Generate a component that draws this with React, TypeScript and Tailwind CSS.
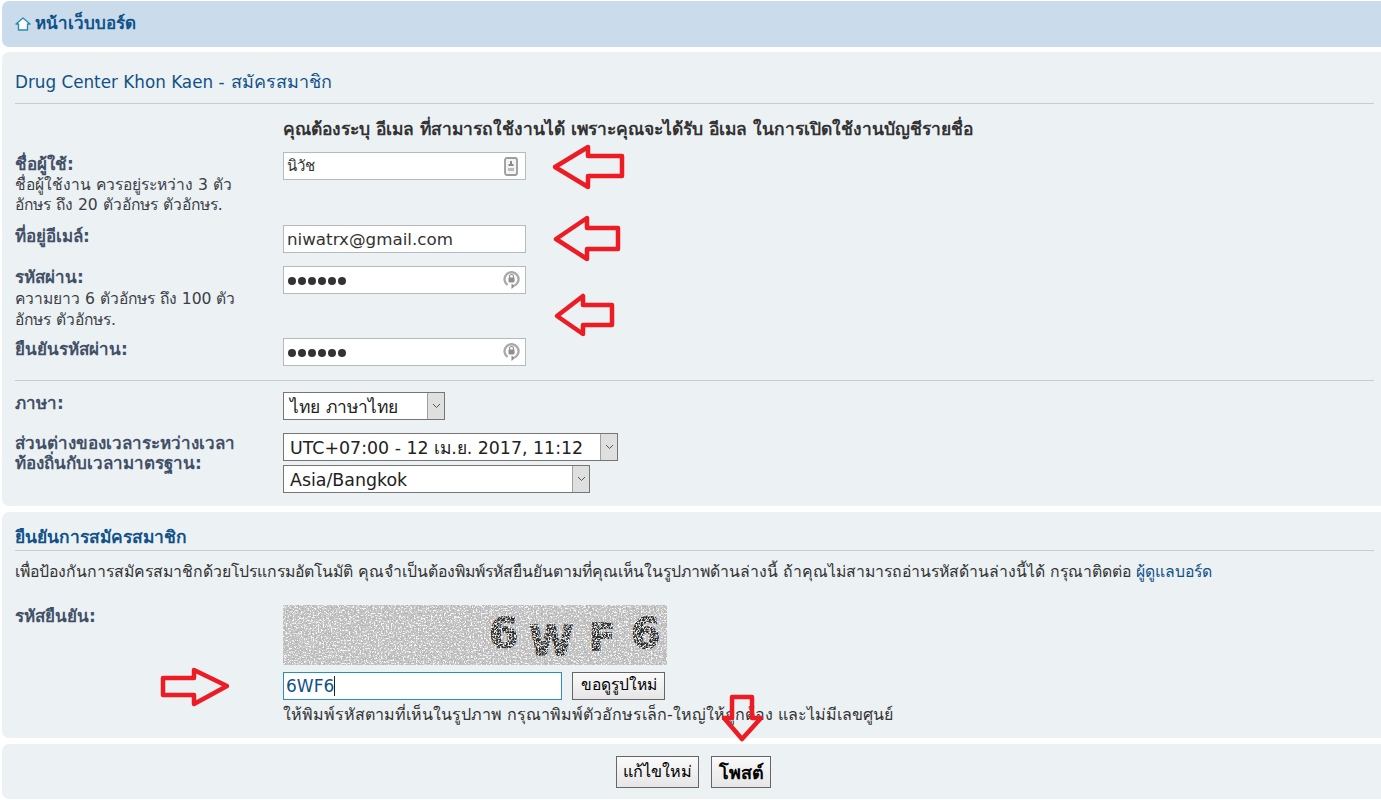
const inputCls =
  "flex items-center h-[28px] border border-[#b4bac0] bg-white px-[3px] text-[#333333]";
const labelCls = "text-[17px] font-bold text-[#425067] leading-[20px]";
const hintCls = "text-[15.6px] text-[#3a3f47] leading-[20px]";

function ContactIcon() {
  return (
    <svg width="14" height="19" viewBox="0 0 14 19" className="ml-auto mr-[4px]">
      <rect x="1" y="1" width="12" height="17" rx="2" fill="#f4f4f4" stroke="#9c9c9c" strokeWidth="1.8" />
      <rect x="6" y="4" width="2" height="3" fill="#8a8a8a" />
      <rect x="4.5" y="7" width="5" height="2" fill="#8a8a8a" />
      <rect x="4" y="11" width="6" height="3" fill="#bbbbbb" />
    </svg>
  );
}

function LockIcon() {
  return (
    <svg width="17" height="18" viewBox="0 0 17 18" className="ml-auto mr-[2px]">
      <path d="M4.5 14 A7 7 0 1 1 11.5 14.6" fill="none" stroke="#ababab" strokeWidth="2.4" />
      <path d="M8.5 18 L8.5 12.5 L12 15 Z" fill="#8f8f8f" />
      <rect x="5.5" y="6.5" width="6" height="5" rx="1" fill="#8f8f8f" />
      <path d="M6.5 7 V5.5 A2 2 0 0 1 10.5 5.5 V7" fill="none" stroke="#8f8f8f" strokeWidth="1.2" />
    </svg>
  );
}

function Dots() {
  return (
    <span className="flex gap-[2px] mt-[2px] ml-[1px]">
      {[0, 1, 2, 3, 4, 5].map((i) => (
        <span key={i} className="w-[8px] h-[8px] rounded-full bg-[#333333]" />
      ))}
    </span>
  );
}

function SelectBox({ width, text }: { width: string; text: string }) {
  return (
    <div className={`flex items-center justify-between h-[28px] border border-[#767676] bg-white pl-[6px] pr-0 text-[17.4px] text-[#222222] ${width}`}>
      <span className="pt-[2px]">{text}</span>
      <span className="flex items-center justify-center w-[17px] h-full bg-[#dfdfdf] border-l border-[#a0a0a0]">
        <svg width="9" height="6" viewBox="0 0 9 6">
          <path d="M1 1 L4.5 4.5 L8 1" fill="none" stroke="#555555" strokeWidth="1" />
        </svg>
      </span>
    </div>
  );
}

function Button({ children, bold }: { children: string; bold?: boolean }) {
  return (
    <button
      className={`h-[32px] border border-[#666666] bg-gradient-to-b from-[#fafafa] to-[#e6e6e6] text-black ${
        bold ? "font-bold text-[18px] w-[60px]" : "text-[16.2px] w-[83px]"
      }`}
    >
      {children}
    </button>
  );
}

function Captcha() {
  return (
    <svg width="384" height="60" className="block">
      <filter id="darkNoise">
        <feTurbulence type="fractalNoise" baseFrequency="0.6" numOctaves="2" seed="4" />
        <feColorMatrix values="0 0 0 0 0.45  0 0 0 0 0.45  0 0 0 0 0.45  6 0 0 0 -2.9" />
      </filter>
      <filter id="lightNoise">
        <feTurbulence type="fractalNoise" baseFrequency="0.6" numOctaves="2" seed="11" />
        <feColorMatrix values="0 0 0 0 0.93  0 0 0 0 0.93  0 0 0 0 0.93  6 0 0 0 -3.1" />
      </filter>
      <rect width="384" height="60" fill="#c4c4c4" />
      <g fontFamily="'DejaVu Sans', sans-serif" fontWeight="bold" fill="#2c2c2c" stroke="#2c2c2c" strokeWidth="1.5">
        <text x="206" y="43" fontSize="42">6</text>
        <text x="246" y="50" fontSize="40">W</text>
        <text x="306" y="45" fontSize="38">F</text>
        <text x="348" y="43" fontSize="42">6</text>
      </g>
      <rect width="384" height="60" filter="url(#darkNoise)" />
      <rect width="384" height="60" filter="url(#lightNoise)" />
    </svg>
  );
}

function Arrows() {
  const arrows = [
    "555,167 588,147 588,156 622,156 622,176 588,176 588,187",
    "556,239 587,218 587,228 618,228 618,249 587,249 587,259",
    "557,316 583,296 583,305 612,305 612,325 583,325 583,334",
    "227,686 194,670 194,678 163,678 163,695 194,695 194,704",
    "742,739 724,718 732,718 732,697 752,697 752,718 761,718",
  ];
  return (
    <svg width="1381" height="800" className="absolute top-0 left-0 pointer-events-none">
      {arrows.map((points) => (
        <polygon key={points} points={points} fill="none" stroke="#ed1c24" strokeWidth="4.5" strokeLinejoin="round" />
      ))}
    </svg>
  );
}

export default function App() {
  return (
    <div
      className="relative w-[1381px] h-[800px] overflow-hidden bg-white pl-[2px] pt-[1px] text-[14px] text-[#536482]"
      style={{ fontFamily: "Verdana, 'DejaVu Sans', 'Noto Sans', sans-serif" }}
    >
      {/* หน้าเว็บบอร์ด */}
      <div className="flex items-center h-[46px] rounded-l-[7px] bg-[#cadceb] pl-[13px] gap-[4px]">
        <svg width="16" height="14" viewBox="0 0 16 14">
          <path d="M1 7 L8 1 L15 7 H12.5 V13 H3.5 V7 Z" fill="#ffffff" stroke="#2a8bb0" strokeWidth="1.4" strokeLinejoin="round" />
        </svg>
        <span className="text-[17px] font-bold text-[#105289]">หน้าเว็บบอร์ด</span>
      </div>

      {/* สมัครสมาชิก */}
      <div className="mt-[5px] h-[454px] rounded-l-[7px] bg-[#ecf1f3] pl-[13px] pr-[7px] pt-[18px]">
        <h2 className="text-[16.8px] leading-[24px] text-[#105289] border-b border-[#cccccc] pb-[9px]">
          Drug Center Khon Kaen - <span className="ml-[1px] text-[18px]">สมัครสมาชิก</span>
        </h2>
        <p className="mt-[15px] ml-[268px] text-[17.45px] leading-[20px] font-bold text-[#333333]">
          คุณต้องระบุ อีเมล ที่สามารถใช้งานได้ เพราะคุณจะได้รับ อีเมล ในการเปิดใช้งานบัญชีรายชื่อ
        </p>

        <div className="mt-[13px] flex h-[73px]">
          <div className="w-[268px] pt-[2px]">
            <div className={labelCls}>ชื่อผู้ใช้:</div>
            <div className={`mt-[1px] ${hintCls}`}>ชื่อผู้ใช้งาน ควรอยู่ระหว่าง 3 ตัว</div>
            <div className={hintCls}>อักษร ถึง 20 ตัวอักษร ตัวอักษร.</div>
          </div>
          <div className={`${inputCls} w-[243px] text-[15px]`}>
            นิวัช
            <ContactIcon />
          </div>
        </div>

        <div className="flex h-[41px]">
          <div className={`w-[268px] pt-[1px] ${labelCls}`}>ที่อยู่อีเมล์:</div>
          <div className={`${inputCls} w-[243px] text-[16.7px]`}>
            <span className="pt-[2px]">niwatrx@gmail.com</span>
          </div>
        </div>

        <div className="flex h-[72px]">
          <div className="w-[268px] pt-[1px]">
            <div className={labelCls}>รหัสผ่าน:</div>
            <div className={`mt-[2px] ${hintCls}`}>ความยาว 6 ตัวอักษร ถึง 100 ตัว</div>
            <div className={`mt-[1px] ${hintCls}`}>อักษร ตัวอักษร.</div>
          </div>
          <div className={`${inputCls} w-[243px]`}>
            <Dots />
            <LockIcon />
          </div>
        </div>

        <div className="flex h-[43px] border-b border-[#cccccc]">
          <div className={`w-[268px] pt-[1px] ${labelCls}`}>ยืนยันรหัสผ่าน:</div>
          <div className={`${inputCls} w-[243px]`}>
            <Dots />
            <LockIcon />
          </div>
        </div>

        <div className="mt-[11px] flex h-[41px]">
          <div className={`w-[268px] pt-[1px] ${labelCls}`}>ภาษา:</div>
          <SelectBox width="w-[162px]" text="ไทย ภาษาไทย" />
        </div>

        <div className="flex">
          <div className={`w-[268px] ${labelCls}`}>
            <div>ส่วนต่างของเวลาระหว่างเวลา</div>
            <div>ท้องถิ่นกับเวลามาตรฐาน:</div>
          </div>
          <div className="flex flex-col gap-[4px]">
            <SelectBox width="w-[335px]" text="UTC+07:00 - 12 เม.ย. 2017, 11:12" />
            <SelectBox width="w-[307px]" text="Asia/Bangkok" />
          </div>
        </div>
      </div>

      {/* ยืนยันการสมัครสมาชิก */}
      <div className="mt-[6px] h-[226px] rounded-l-[7px] bg-[#ecf1f3] pl-[13px] pr-[7px] pt-[15px]">
        <h3 className="text-[17.4px] leading-[20px] font-bold text-[#105289] border-b border-[#cccccc] pb-[3px]">
          ยืนยันการสมัครสมาชิก
        </h3>
        <p className="mt-[11px] text-[15.8px] leading-[20px] text-[#333333]">
          เพื่อป้องกันการสมัครสมาชิกด้วยโปรแกรมอัตโนมัติ คุณจำเป็นต้องพิมพ์รหัสยืนยันตามที่คุณเห็นในรูปภาพด้านล่างนี้ ถ้าคุณไม่สามารถอ่านรหัสด้านล่างนี้ได้ กรุณาติดต่อ{" "}
          <span className="text-[#105289]">ผู้ดูแลบอร์ด</span>
        </p>
        <div className="mt-[23px] flex">
          <div className={`w-[268px] pt-[1px] ${labelCls}`}>รหัสยืนยัน:</div>
          <div>
            <Captcha />
            <div className="mt-[7px] flex gap-[10px]">
              <div className="flex items-center w-[279px] h-[28px] border border-[#2a8fbd] bg-white px-[2px] text-[17px] text-[#105289]">
                <span className="pt-[1px]">6WF6</span>
                <span className="w-px h-[20px] bg-[#222222]" />
              </div>
              <button className="w-[93px] h-[28px] border border-[#666666] bg-gradient-to-b from-[#fafafa] to-[#e6e6e6] text-[15.6px] text-black">
                ขอดูรูปใหม่
              </button>
            </div>
            <p className="mt-[5px] text-[16.05px] leading-[20px] text-[#333333]">
              ให้พิมพ์รหัสตามที่เห็นในรูปภาพ กรุณาพิมพ์ตัวอักษรเล็ก-ใหญ่ให้ถูกต้อง และไม่มีเลขศูนย์
            </p>
          </div>
        </div>
      </div>

      {/* ปุ่ม */}
      <div className="mt-[6px] flex h-[55px] justify-center gap-[12px] rounded-l-[7px] bg-[#ecf1f3] pt-[12px] pl-[4px]">
        <Button>แก้ไขใหม่</Button>
        <Button bold>โพสต์</Button>
      </div>

      <Arrows />
    </div>
  );
}
